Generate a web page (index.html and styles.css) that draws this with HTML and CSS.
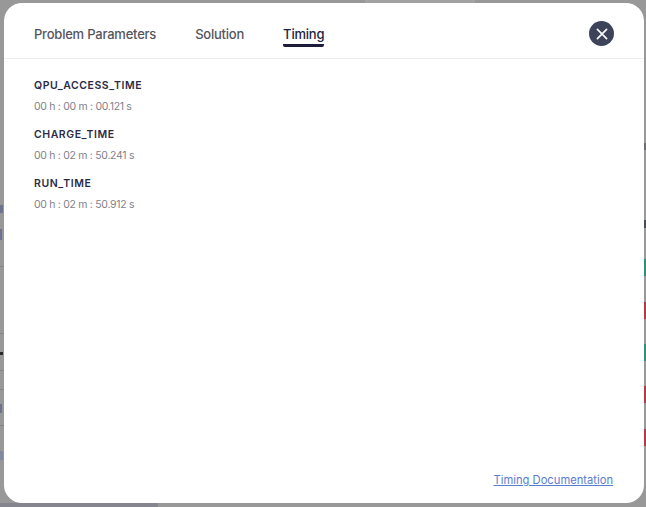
FILE: index.html
```html
<!DOCTYPE html>
<html lang="en">
<head>
<meta charset="utf-8">
<title>Timing</title>
<link rel="stylesheet" href="styles.css">
</head>
<body>
<div class="backdrop">
  <div class="top-strip"></div>
  <div class="bottom-strip"></div>
  <div class="edge-left">
    <span class="rule r1"></span>
    <span class="rule r2"></span>
    <span class="rule r3"></span>
    <span class="rule r4"></span>
    <span class="rule r5"></span>
    <span class="frag f1"></span>
    <span class="frag f2"></span>
    <span class="frag f3"></span>
    <span class="frag f4"></span>
    <span class="frag f5"></span>
  </div>
  <div class="edge-right">
    <span class="chip chip-grey"></span>
    <span class="chip chip-dark"></span>
    <span class="chip chip-green c1"></span>
    <span class="chip chip-red c2"></span>
    <span class="chip chip-green c3"></span>
    <span class="chip chip-red c4"></span>
    <span class="chip chip-red c5"></span>
  </div>
  <main class="modal">
    <header class="modal-head">
      <nav class="tabs">
        <span class="tab">Problem Parameters</span>
        <span class="tab">Solution</span>
        <span class="tab tab-active">Timing</span>
      </nav>
      <button class="close" aria-label="Close">
        <svg width="12" height="12" viewBox="0 0 12 12"><path d="M1.4 1.4L10.6 10.6M10.6 1.4L1.4 10.6" stroke="#fff" stroke-width="1.6" stroke-linecap="round"/></svg>
      </button>
    </header>
    <section class="body">
      <div class="item">
        <div class="label">QPU_ACCESS_TIME</div>
        <div class="value">00 h : 00 m : 00.121 s</div>
      </div>
      <div class="item">
        <div class="label">CHARGE_TIME</div>
        <div class="value">00 h : 02 m : 50.241 s</div>
      </div>
      <div class="item">
        <div class="label">RUN_TIME</div>
        <div class="value">00 h : 02 m : 50.912 s</div>
      </div>
    </section>
    <footer class="foot">
      <a class="doc-link" href="#">Timing Documentation</a>
    </footer>
  </main>
</div>
</body>
</html>
```
FILE: styles.css
```css
* { box-sizing: border-box; }
html, body { margin: 0; height: 100%; }
body { font-family: "Inter", "Liberation Sans", sans-serif; background: #999; overflow: hidden; }
.backdrop { position: relative; width: 646px; height: 507px; background: #989898; padding: 3px 2px 4px 4px; }
.modal { position: relative; width: 640px; height: 500px; background: #fff; border-radius: 18px; display: flex; flex-direction: column; }
.modal-head { height: 56px; border-bottom: 1px solid #ececee; display: flex; align-items: flex-start; justify-content: space-between; padding: 18px 30px 0 30px; flex: none; }
.tabs { display: flex; gap: 39px; }
.tab { font-size: 13px; letter-spacing: -0.22px; line-height: 26px; height: 26px; font-weight: 500; color: #55555e; }
.tab-active { color: #23233f; border-bottom: 3px solid #1c1c3a; border-radius: 0 0 2px 2px; }
.close { width: 25px; height: 25px; border: 0; padding: 0; border-radius: 50%; background: #3d4359; display: flex; align-items: center; justify-content: center; }
.body { flex: 1; padding: 19px 30px 0; display: flex; flex-direction: column; gap: 13px; }
.item { display: flex; flex-direction: column; gap: 6px; }
.label { font-size: 10.5px; line-height: 16px; font-weight: 600; letter-spacing: 0.55px; color: #2b2b44; }
.value { font-size: 10.5px; line-height: 14px; letter-spacing: -0.3px; color: #7f7f8c; }
.foot { flex: none; display: flex; justify-content: flex-end; padding: 0 31px 15px 0; }
.doc-link { font-size: 11.2px; line-height: 16px; color: #5a7ccf; text-decoration: underline; }
.top-strip { position: absolute; left: 365px; top: 0; width: 110px; height: 3px; background: #a2a2a2; }
.bottom-strip { position: absolute; left: 0; bottom: 0; width: 158px; height: 4px; background: #85858f; }
.edge-left, .edge-right { position: absolute; top: 0; height: 507px; }
.edge-left { left: 0; width: 4px; }
.edge-right { right: 0; width: 2px; }
.rule { position: absolute; left: 0; width: 4px; height: 1px; background: #858585; }
.r1 { top: 266px; }
.r2 { top: 333px; }
.r3 { top: 370px; }
.r4 { top: 389px; }
.r5 { top: 425px; }
.frag { position: absolute; left: 0; width: 3px; background: #6c7290; }
.f1 { top: 205px; height: 8px; }
.f2 { top: 229px; height: 11px; width: 2px; }
.f3 { top: 352px; height: 3px; background: #2a2a2a; }
.f4 { top: 404px; height: 9px; width: 2px; }
.f5 { top: 451px; height: 9px; background: #82889f; }
.chip { position: absolute; left: 0; width: 2px; display: block; }
.chip-grey { top: 143px; height: 7px; background: #6e6e70; }
.chip-dark { top: 220px; height: 8px; background: #4a4a58; }
.chip-green { background: #2f8f78; height: 17px; }
.chip-red { background: #b33a48; height: 17px; }
.c1 { top: 259px; }
.c2 { top: 302px; }
.c3 { top: 344px; }
.c4 { top: 386px; }
.c5 { top: 429px; }
```
